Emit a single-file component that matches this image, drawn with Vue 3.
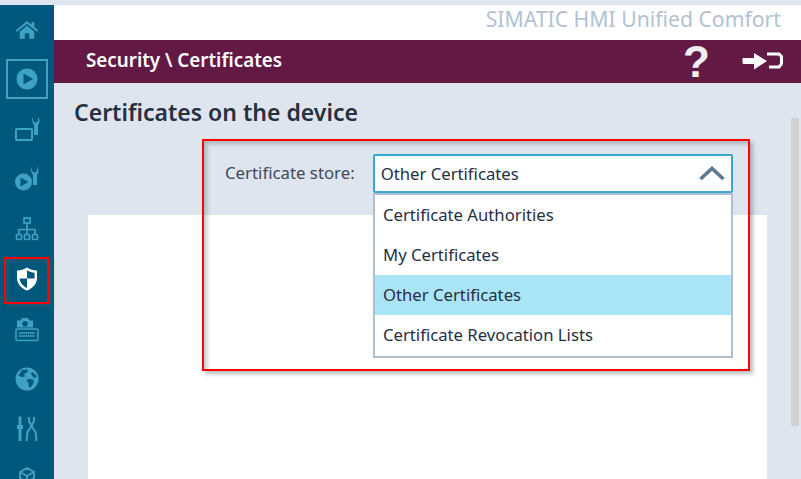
<script setup>
const options = [
  { label: 'Certificate Authorities', active: false },
  { label: 'My Certificates', active: false },
  { label: 'Other Certificates', active: true },
  { label: 'Certificate Revocation Lists', active: false },
]
</script>

<template>
  <div class="screen">
    <aside class="rail">
      <div class="item home">
        <svg width="24" height="20" viewBox="0 0 26 22"><path fill="#3fa2c4" d="M13 1 L18 5.200 V2.500 H21 V7.800 L25.500 11.600 L24 13 L13 4 L2 13 L.5 11.600 Z M5 13 L13 6.400 L21 13 V20.500 H15.500 V14.500 H10.500 V20.500 H5 Z"/></svg>
      </div>
      <div class="item runbox">
        <svg width="22" height="22" viewBox="0 0 22 22"><circle cx="11" cy="11" r="10.500" fill="#3fa2c4"/><path fill="#00587d" d="M7.500 5.500 L17 11 L7.500 16.500 Z"/></svg>
      </div>
      <div class="item">
        <svg width="25" height="26" viewBox="0 0 25 26"><rect x="1" y="13" width="16" height="11" rx="1" fill="none" stroke="#3fa2c4" stroke-width="2"/><path fill="#3fa2c4" d="M18 1 V5 L20.500 7 L23 5 V1 C25 3 25 7 23 9 V19 H19 V9 C17 7 16.500 3 18 1Z"/></svg>
      </div>
      <div class="item">
        <svg width="26" height="26" viewBox="0 0 26 26"><circle cx="9.500" cy="16" r="8.500" fill="#3fa2c4"/><path fill="#00587d" d="M6.500 11.500 L14.500 16 L6.500 20.500 Z"/><path fill="#3fa2c4" d="M18 1 V5 L20.500 7 L23 5 V1 C25 3 25 7 23 9 V19 H19 V9 C17 7 16.500 3 18 1Z"/></svg>
      </div>
      <div class="item">
        <svg width="24" height="24" viewBox="0 0 24 24"><g fill="none" stroke="#3fa2c4" stroke-width="1.700"><rect x="9" y="1" width="6" height="5"/><path d="M12 6 V13 M4 17 V12.500 H20 V17 M12 13 V17"/><rect x="1.500" y="17.500" width="5" height="5" rx="1"/><rect x="9.500" y="17.500" width="5" height="5" rx="1"/><rect x="17.500" y="17.500" width="5" height="5" rx="1"/></g></svg>
      </div>
      <div class="item">
        <svg width="22" height="24" viewBox="0 0 22 24"><path fill="#fff" d="M11 .5 C14 2.500 17.500 3.500 21 3.500 V11 C21 17 16.500 21.500 11 23.500 C5.500 21.500 1 17 1 11 V3.500 C4.500 3.500 8 2.500 11 .5Z"/><path fill="#00587d" d="M11 3.200 C13.500 4.700 16 5.500 18.600 5.800 V11.500 H11 Z M11 11.500 H3.600 C4 15.800 7 19.200 11 21 Z"/></svg>
      </div>
      <div class="item">
        <svg width="24" height="26" viewBox="0 0 24 26"><path fill="#3fa2c4" fill-rule="evenodd" d="M2 11.500 V4.500 H5.500 L7 2 H13 L14.500 4.500 H18 V11.500 Z M10 5 A2.800 2.800 0 1 0 10 10.600 A2.800 2.800 0 1 0 10 5Z"/><g fill="none" stroke="#3fa2c4"><rect x="1" y="13" width="22" height="11.500" rx="1" stroke-width="1.500"/><path stroke-width="1.800" stroke-dasharray="1.500 .7" d="M4 17 H20 M4 20 H20"/></g></svg>
      </div>
      <div class="item">
        <svg width="24" height="24" viewBox="0 0 24 24"><circle cx="12" cy="12" r="11.500" fill="#3fa2c4"/><path fill="#00587d" d="M7 3 L13 2.500 L12 5.500 L9 7 L10 9.500 L6.500 10 L3.500 8.500 Z M13 12 L18 12.500 L19 15 L16 20 L14 20.500 L13.500 16 L11.500 14 Z M17 5 L21 8 L21.500 11 L18 10 L16 7 Z"/></svg>
      </div>
      <div class="item">
        <svg width="22" height="26" viewBox="0 0 22 26"><path fill="#3fa2c4" d="M2.500 .5 H5.500 V9 H7 V13 H5.500 V25 H2.500 V13 H1 V9 H2.500 Z"/><path fill="none" stroke="#3fa2c4" stroke-width="2" d="M13 1 V5 L15.500 10 L18 5 V1 M15.500 10 L11.500 16 L10.500 25 M15.500 10 L19.500 16 L20.500 25"/></svg>
      </div>
      <div class="item">
        <svg width="24" height="24" viewBox="0 0 24 24"><g fill="none" stroke="#3fa2c4" stroke-width="1.800"><path d="M12 1 L19 5 V11 L12 15 L5 11 V5 Z M5 5 L12 9 L19 5 M12 9 V15"/></g></svg>
      </div>
    </aside>

    <main class="main">
      <div class="brand">SIMATIC HMI Unified Comfort</div>
      <header class="bar">
        <span class="crumb">Security \ Certificates</span>
        <span class="help">?</span>
        <svg class="logout" width="41" height="19" viewBox="0 0 41 19"><path fill="#fff" d="M.5 6 H12 V1 L25 9 L12 17.500 V12 H2 Q.5 12 .5 10.500 Z"/><path fill="none" stroke="#fff" stroke-width="3" d="M25 2 H37 L39.500 4.500 V12 L37 15 H27"/></svg>
      </header>
      <div class="content">
        <h1 class="heading">Certificates on the device</h1>
        <div class="store">
          <label class="store-label">Certificate store:</label>
          <div class="select">
            <span>Other Certificates</span>
            <svg width="26" height="14" viewBox="0 0 26 14"><path fill="none" stroke="#5f7b8e" stroke-width="3.600" d="M1.500 13 L13 2.500 L24.500 13"/></svg>
          </div>
        </div>
        <div class="panel"></div>
        <div class="scroll"></div>
        <ul class="menu">
          <li v-for="o in options" :key="o.label" :class="{ active: o.active }">{{ o.label }}</li>
        </ul>
      </div>
    </main>

    <div class="mark mark-nav"></div>
    <div class="mark mark-store"></div>
  </div>
</template>

<style>
html, body { margin: 0; background: #fff; }
</style>

<style scoped>
.screen {
  position: relative;
  display: flex;
  width: 801px;
  height: 479px;
  overflow: hidden;
  background: #dfe5ee;
  font-family: "Noto Sans", "Open Sans", sans-serif;
  color: #26303f;
}
.rail {
  width: 54px;
  height: 474px;
  margin-top: 5px;
  background: #00587d;
  flex: none;
  display: flex;
  flex-direction: column;
  align-items: center;
  overflow: hidden;
}
.item { display: flex; align-items: center; justify-content: center; flex: none; height: 50px; width: 100%; }
.runbox {
  width: 42px; height: 40px; box-sizing: border-box;
  border: 2px solid #3fa2c4;
  margin: 4px 0 5px;
}
.main { flex: 1; min-width: 0; display: flex; flex-direction: column; }
.brand {
  margin-top: 5px;
  height: 35px;
  box-sizing: border-box;
  background: #fff;
  color: #b3c2d1;
  font-size: 21.200px;
  line-height: 28px;
  text-align: right;
  padding-right: 20px;
}
.bar {
  height: 43px;
  background: #621a45;
  color: #fff;
  display: flex;
  align-items: center;
  padding-left: 32px;
  flex: none;
}
.crumb { font-size: 18.800px; line-height: 40px; padding-bottom: 3px; font-weight: 600; flex: 1; }
.help { font-size: 44px; font-weight: 700; font-family: "Liberation Sans", sans-serif; color: #f1eef1; line-height: 43px; margin-right: 32px; }
.logout { margin-right: 18px; }
.content { position: relative; flex: 1; min-height: 0; }
.heading { margin: 0; padding: 14px 0 0 20px; font-size: 23px; line-height: 30px; font-weight: 600; color: #26303f; }
.store { position: absolute; left: 171px; top: 71px; display: flex; align-items: center; gap: 18px; }
.store-label { font-size: 16.800px; line-height: 37px; padding-bottom: 2px; color: #3d4a5c; }
.select {
  width: 360px; height: 39px; box-sizing: border-box;
  border: 2px solid #3aa8ce; border-radius: 2px;
  background: #fff;
  display: flex; align-items: center; justify-content: space-between;
  padding: 0 6px 1px;
  font-size: 16.700px;
}
.panel { position: absolute; left: 34px; top: 132px; width: 679px; bottom: 0; background: #fff; }
.scroll { position: absolute; left: 737px; top: 35px; width: 8px; height: 308px; background: #d2d2d2; }
.menu {
  position: absolute; left: 319px; top: 110px; width: 360px;
  box-sizing: border-box; margin: 0; padding: 0 0 1px; list-style: none;
  background: #fff;
  border: 2px solid #aebfcf;
  font-size: 16.700px;
}
.menu li { height: 40px; line-height: 40px; padding-left: 8px; }
.menu li.active { background: #a9e5f6; }
.mark { position: absolute; box-sizing: border-box; border: 2px solid #f00; box-shadow: 3px 3px 4px rgba(80, 90, 100, .4), inset 3px 3px 4px rgba(80, 90, 100, .35); }
.mark-nav { left: 4px; top: 257px; width: 45px; height: 47px; }
.mark-store { left: 202px; top: 139px; width: 548px; height: 232px; }
</style>
